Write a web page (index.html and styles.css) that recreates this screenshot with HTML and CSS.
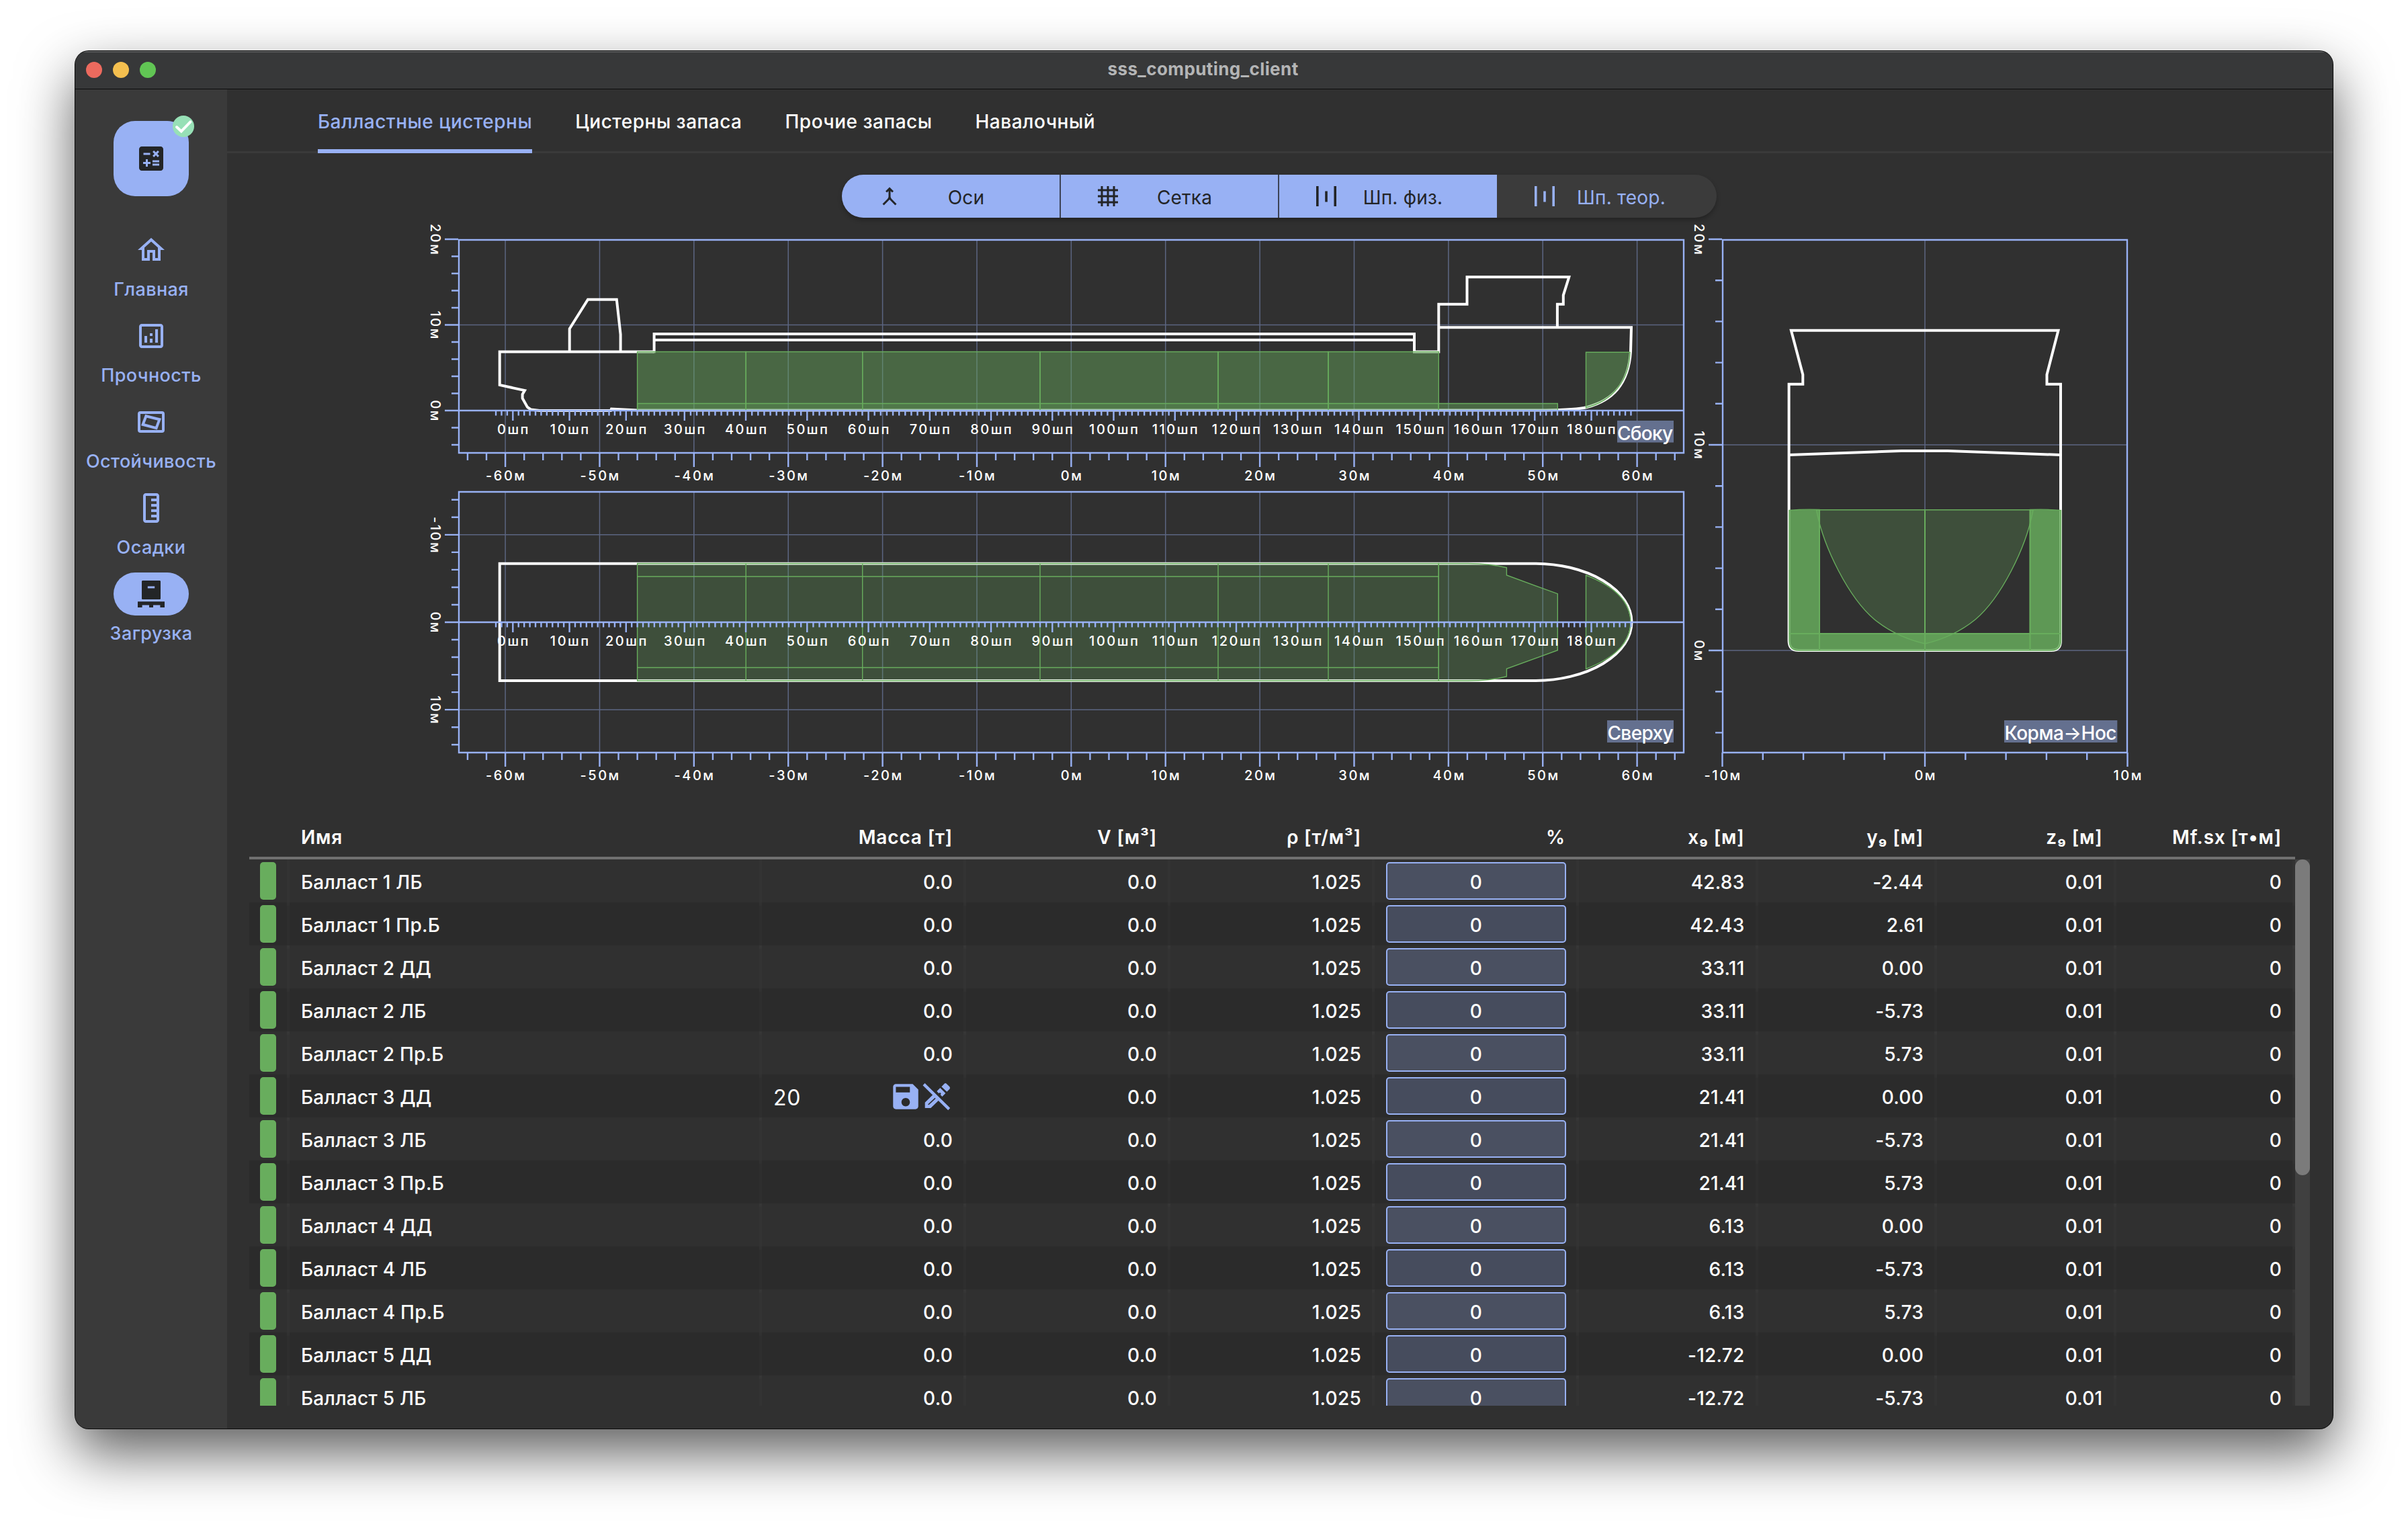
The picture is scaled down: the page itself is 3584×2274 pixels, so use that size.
FILE: index.html
```html
<!DOCTYPE html>
<html lang="ru">
<head>
<meta charset="utf-8">
<title>sss_computing_client</title>
<link rel="stylesheet" href="styles.css">
</head>
<body>
<div class="window">
  <header class="titlebar">
    <div class="lights"><i class="light red"></i><i class="light yellow"></i><i class="light green"></i></div>
    <span class="title">sss_computing_client</span>
  </header>
  <div class="content">
    <nav class="rail">
      <button class="fab">
        <svg class="icon" viewBox="0 0 24 24"><path fill-rule="evenodd" d="M19 3H5c-1.1 0-2 .9-2 2v14c0 1.1.9 2 2 2h14c1.1 0 2-.9 2-2V5c0-1.1-.9-2-2-2zm-5.97 4.06L14.09 6l1.41 1.41L16.91 6l1.06 1.06-1.41 1.41 1.41 1.41-1.06 1.06-1.41-1.4-1.41 1.41-1.06-1.06 1.41-1.41-1.41-1.42zm-6.78.66h5v1.5h-5v-1.5zM11.5 16h-2v2H8v-2H6v-1.5h2v-2h1.5v2h2V16zm6.5 1.25h-5v-1.5h5v1.5zm0-2.5h-5v-1.5h5v1.5z"/></svg>
        <span class="badge"><svg viewBox="0 0 24 24"><path d="M4.5 12.8L9.6 17.6L19.8 7" /></svg></span>
      </button>
      <a class="dest"><span class="pill"><svg class="icon" viewBox="0 0 24 24"><path d="M12 5.69l5 4.5V18h-2v-6H9v6H7v-7.81l5-4.5M12 3L2 12h3v8h6v-6h2v6h6v-8h3L12 3z"/></svg></span><span class="dest-label">Главная</span></a>
      <a class="dest"><span class="pill"><svg class="icon" viewBox="0 0 24 24"><path d="M19 3H5c-1.1 0-2 .9-2 2v14c0 1.1.9 2 2 2h14c1.1 0 2-.9 2-2V5c0-1.1-.9-2-2-2zm0 16H5V5h14v14zM7 12h2v5H7zm8-5h2v10h-2zm-4 7h2v3h-2zm0-4h2v2h-2z"/></svg></span><span class="dest-label">Прочность</span></a>
      <a class="dest"><span class="pill"><svg class="icon outline" viewBox="0 0 24 24"><rect x="3" y="5" width="18" height="14" rx="1"/><path d="M8.2 7.6L18.2 10.1L15.8 16.6L5.8 13.9z"/></svg></span><span class="dest-label">Остойчивость</span></a>
      <a class="dest"><span class="pill"><svg class="icon" viewBox="0 0 24 24"><path transform="rotate(90 12 12)" d="M21 6H3c-1.1 0-2 .9-2 2v8c0 1.1.9 2 2 2h18c1.1 0 2-.9 2-2V8c0-1.1-.9-2-2-2zm0 10H3V8h2v4h2V8h2v4h2V8h2v4h2V8h2v4h2V8h2v8z"/></svg></span><span class="dest-label">Осадки</span></a>
      <a class="dest active"><span class="pill"><svg class="icon" viewBox="0 0 24 24"><path fill-rule="evenodd" d="M5.8 2h12.4c.5 0 .8.3.8.8v12.4c0 .5-.3.8-.8.8H5.800c-.5 0-.8-.3-.8-.8V2.800c0-.5.3-.8.8-.8zM9.400 6.200v1.500h5.200V6.200zM2 17.600h20V22h-3.300v-1.700h-5.200V22h-3v-1.700H5.300V22H2z"/></svg></span><span class="dest-label">Загрузка</span></a>
    </nav>
    <main class="main">
      <div class="tabs">
        <a class="tab current">Балластные цистерны</a>
        <a class="tab">Цистерны запаса</a>
        <a class="tab">Прочие запасы</a>
        <a class="tab">Навалочный</a>
      </div>
      <div class="toggles">
        <button class="toggle on"><svg viewBox="0 0 24 24"><path d="M6.41 21L5 19.59l4.830-4.830c.75-.75 1.170-1.770 1.170-2.830v-5.100L9.410 8.410 8 7l4-4 4 4-1.410 1.410L13 6.830v5.100c0 1.060.42 2.080 1.170 2.830L19 19.590 17.590 21 12 15.410 6.410 21z"/></svg><span>Оси</span></button>
        <button class="toggle on"><svg viewBox="0 0 24 24"><path d="M22 7V5h-3V2h-2v3h-4V2h-2v3H7V2H5v3H2v2h3v4H2v2h3v4H2v2h3v3h2v-3h4v3h2v-3h4v3h2v-3h3v-2h-3v-4h3v-2h-3V7h3zM7 7h4v4H7V7zm0 10v-4h4v4H7zm10 0h-4v-4h4v4zm0-6h-4V7h4v4z"/></svg><span>Сетка</span></button>
        <button class="toggle on"><svg viewBox="0 0 24 24"><path d="M2 2h2.400v20H2zM10.800 7h2.400v10.600h-2.400zM19.600 2H22v20h-2.400z"/></svg><span>Шп. физ.</span></button>
        <button class="toggle"><svg viewBox="0 0 24 24"><path d="M2 2h2.400v20H2zM10.800 7h2.400v10.600h-2.400zM19.600 2H22v20h-2.400z"/></svg><span>Шп. теор.</span></button>
      </div>

      <div class="views">
        <div class="views-left">
          <svg id="side" class="view" width="1871" height="392" viewBox="636 330 1871 392">
            <g class="grid"></g>
            <g class="hull">
              <path d="M973.600 523.500H743.700V573L781 581L777.600 586.700V592.700L785 606L790 609.500L803 611H909L910 608.500L948 610.500H2300C2335 610 2350 609 2362 606C2400 596 2424 572 2427 523L2428 487.300H2141.300"/>
              <path d="M847.700 523V489.300L875 445.700H917.800L923.600 497.700V523"/>
              <path d="M973.600 525.300V497H2105V523.500H2141.300V452.700H2183.500V412.300H2335.300L2326.800 439.300V452.700H2317.900V487M973.600 506H2105"/>
            </g>
            <g class="tanks double">
              <path d="M948.600 523.500H1110.200V611H948.600z"/><path d="M1110.200 523.500H1283.700V611H1110.200z"/><path d="M1283.700 523.500H1548V611H1283.700z"/><path d="M1548 523.500H1813V611H1548z"/><path d="M1813 523.500H1977V611H1813z"/><path d="M1977 523.500H2141.300V611H1977z"/>
              <path d="M2360.500 524.300H2426C2425 566 2400 597 2360.500 606.700z"/>
              <path d="M2141.300 600.500H2318.300V611H2141.300z"/>
            </g>
            <g class="tanks"><path d="M948.600 600.500H2141.300V611H948.600z"/></g>
            <g class="axes"></g>
            <g class="tag"><rect x="2407" y="626" width="84" height="32.500"/><text x="2448.500" y="654.500" textLength="83">Сбоку</text></g>
          </svg>
          <svg id="top" class="view" width="1871" height="454" viewBox="636 722 1871 454">
            <g class="grid"></g>
            <g class="hull"><path d="M743.700 838.700H2284A144.500 87.150 0 0 1 2284 1013H743.700z"/></g>
            <g class="tanks">
              <path d="M948.600 838.500H2141.300V1013.300H948.600z"/>
              <path d="M2141.300 838.500H2185Q2218 839 2242.400 844.700V856L2318.300 883.700V967.700L2242.400 995.300V1006.700Q2218 1013 2185 1013.300H2141.300z"/>
              <path d="M2360.500 856Q2427 882 2427 926Q2427 970 2360.500 995.500z"/>
              <path class="line" d="M948.600 858H2141.300M948.600 993.500H2141.300M1110.200 838.500V1013.300M1283.700 838.500V1013.300M1548 838.500V1013.300M1813 838.500V1013.300M1977 838.500V1013.300"/>
            </g>
            <g class="axes"></g>
            <g class="tag"><rect x="2392" y="1072" width="99" height="33"/><text x="2441.500" y="1101" textLength="98">Сверху</text></g>
          </svg>
        </div>
        <svg id="front" class="view" width="693" height="846" viewBox="2507 330 693 846">
          <g class="grid"></g>
          <g class="hull">
            <path d="M2665.900 491.700H3063.500L3046.500 557.500V571.700H3067V953.500Q3067 968 3053 968H2677Q2662.600 968 2662.600 953.500V571.700H2683.300V557.500z"/>
            <path d="M2662.600 677L2830 671H2899L3067 677"/>
          </g>
          <g class="tanks">
            <path d="M2703.500 758.800C2714 815 2752 890 2790 922Q2822 948 2865 958Q2908 948 2940 922C2978 890 3016 815 3026 758.800z"/>
            <path class="solid" d="M2663 759.500Q2685 757.500 2708 758.500V943H3021.500V758.500Q3045 757.500 3067.500 759.500V953.500Q3067 968 3053 968H2677Q2663 968 2663 953.500z"/>
            <path class="line bold" d="M2865 759.500V968M2708 758.500V968M3021.500 758.500V968M2663 943H3067"/>
          </g>
          <g class="axes"></g>
          <g class="tag"><rect x="2983" y="1072" width="168.300" height="33"/><text x="3067" y="1101" textLength="167">Корма→Нос</text></g>
        </svg>
      </div>

      <section class="tanks-table">
        <div class="row head"><span></span><span class="name">Имя</span><span>Масса [т]</span><span>V [м³]</span><span>ρ [т/м³]</span><span>%</span><span>x₉ [м]</span><span>y₉ [м]</span><span>z₉ [м]</span><span>Mf.sx [т•м]</span></div>
        <div class="scroller">
          <div class="rows">
            <div class="row"><span class="mark"><i></i></span><span class="name">Балласт 1 ЛБ</span><span>0.0</span><span>0.0</span><span>1.025</span><span class="level"><b>0</b></span><span>42.83</span><span>-2.44</span><span>0.01</span><span>0</span></div>
            <div class="row"><span class="mark"><i></i></span><span class="name">Балласт 1 Пр.Б</span><span>0.0</span><span>0.0</span><span>1.025</span><span class="level"><b>0</b></span><span>42.43</span><span>2.61</span><span>0.01</span><span>0</span></div>
            <div class="row"><span class="mark"><i></i></span><span class="name">Балласт 2 ДД</span><span>0.0</span><span>0.0</span><span>1.025</span><span class="level"><b>0</b></span><span>33.11</span><span>0.00</span><span>0.01</span><span>0</span></div>
            <div class="row"><span class="mark"><i></i></span><span class="name">Балласт 2 ЛБ</span><span>0.0</span><span>0.0</span><span>1.025</span><span class="level"><b>0</b></span><span>33.11</span><span>-5.73</span><span>0.01</span><span>0</span></div>
            <div class="row"><span class="mark"><i></i></span><span class="name">Балласт 2 Пр.Б</span><span>0.0</span><span>0.0</span><span>1.025</span><span class="level"><b>0</b></span><span>33.11</span><span>5.73</span><span>0.01</span><span>0</span></div>
            <div class="row"><span class="mark"><i></i></span><span class="name">Балласт 3 ДД</span><span class="edit"><em>20</em><svg class="save" viewBox="0 0 24 24"><path d="M17 3H5c-1.110 0-2 .9-2 2v14c0 1.100.89 2 2 2h14c1.100 0 2-.9 2-2V7l-4-4zm-5 16c-1.660 0-3-1.340-3-3s1.340-3 3-3 3 1.340 3 3-1.340 3-3 3zm3-10H5V5h10v4z"/></svg><svg class="cancel" viewBox="275 90 132 132"><path d="M289 207V182L325 147L350 173L315 207z"/><path class="slit" d="M304 192L335 163"/><path d="M342 132L357 117L381 141L366 156L358 148L361 143L357 138L350 141z"/><path d="M363 112L376 98Q380 94 385 98L399 112Q403 117 399 122L387 134z"/><path class="slash" d="M284 101L397 212"/></svg></span><span>0.0</span><span>1.025</span><span class="level"><b>0</b></span><span>21.41</span><span>0.00</span><span>0.01</span><span>0</span></div>
            <div class="row"><span class="mark"><i></i></span><span class="name">Балласт 3 ЛБ</span><span>0.0</span><span>0.0</span><span>1.025</span><span class="level"><b>0</b></span><span>21.41</span><span>-5.73</span><span>0.01</span><span>0</span></div>
            <div class="row"><span class="mark"><i></i></span><span class="name">Балласт 3 Пр.Б</span><span>0.0</span><span>0.0</span><span>1.025</span><span class="level"><b>0</b></span><span>21.41</span><span>5.73</span><span>0.01</span><span>0</span></div>
            <div class="row"><span class="mark"><i></i></span><span class="name">Балласт 4 ДД</span><span>0.0</span><span>0.0</span><span>1.025</span><span class="level"><b>0</b></span><span>6.13</span><span>0.00</span><span>0.01</span><span>0</span></div>
            <div class="row"><span class="mark"><i></i></span><span class="name">Балласт 4 ЛБ</span><span>0.0</span><span>0.0</span><span>1.025</span><span class="level"><b>0</b></span><span>6.13</span><span>-5.73</span><span>0.01</span><span>0</span></div>
            <div class="row"><span class="mark"><i></i></span><span class="name">Балласт 4 Пр.Б</span><span>0.0</span><span>0.0</span><span>1.025</span><span class="level"><b>0</b></span><span>6.13</span><span>5.73</span><span>0.01</span><span>0</span></div>
            <div class="row"><span class="mark"><i></i></span><span class="name">Балласт 5 ДД</span><span>0.0</span><span>0.0</span><span>1.025</span><span class="level"><b>0</b></span><span>-12.72</span><span>0.00</span><span>0.01</span><span>0</span></div>
            <div class="row"><span class="mark"><i></i></span><span class="name">Балласт 5 ЛБ</span><span>0.0</span><span>0.0</span><span>1.025</span><span class="level"><b>0</b></span><span>-12.72</span><span>-5.73</span><span>0.01</span><span>0</span></div>
          </div>
          <div class="track"><div class="thumb"></div></div>
        </div>
      </section>
    </main>
  </div>
</div>
<script src="charts.js"></script>
</body>
</html>
```
FILE: styles.css
```css
:root {
  --primary: #98b1f4;
  --surface: #303030;
  --raised: #3a3a3a;
  --ink: #232527;
  --green: #68ad5d;
}
* { box-sizing: border-box; }
body {
  margin: 0;
  width: 3584px;
  height: 2274px;
  padding: 76px 112px;
  overflow: hidden;
  background: #fff;
  color: #fff;
  font: 500 28px/32px Inter, "Liberation Sans", sans-serif;
}
button { border: 0; padding: 0; background: none; font: inherit; color: inherit; }
.window {
  width: 3360px;
  height: 2050px;
  border-radius: 20px;
  overflow: hidden;
  background: var(--surface);
  box-shadow: 0 0 0 1px #0a0a0a, 0 36px 84px rgba(0, 0, 0, .64);
  display: flex;
  flex-direction: column;
}
.titlebar {
  height: 57px;
  display: grid;
  grid-template-columns: 1fr auto 1fr;
  align-items: center;
  background: #373839;
  border-bottom: 1px solid #0c0c0c;
  box-shadow: inset 0 2px #5a5b5c;
}
.lights { display: flex; gap: 16px; padding-left: 16px; }
.light { width: 24px; height: 24px; border-radius: 50%; }
.red { background: #ec6a5e; }
.yellow { background: #f4bf4f; }
.green { background: #61c554; }
.title { font-size: 26px; font-weight: 700; color: #b4b5b6; letter-spacing: .42px; padding: 0 3px 2px 0; }
.content { flex: 1; display: flex; min-height: 0; }

.rail {
  width: 226px;
  padding-top: 47px;
  background: var(--raised);
  display: flex;
  flex-direction: column;
  align-items: center;
}
.icon { width: 48px; height: 48px; fill: currentColor; }
.icon.outline { fill: none; stroke: currentColor; stroke-width: 2; }
.fab {
  position: relative;
  width: 112px;
  height: 112px;
  margin-bottom: 48px;
  border-radius: 32px;
  background: var(--primary);
  color: var(--ink);
  display: grid;
  place-items: center;
}
.badge {
  position: absolute;
  top: -8px;
  right: -8px;
  width: 32px;
  height: 32px;
  border-radius: 50%;
  background: #97e0b6;
}
.badge svg { display: block; fill: none; stroke: #fff; stroke-width: 3; stroke-linecap: round; }
.dest {
  height: 128px;
  display: flex;
  flex-direction: column;
  align-items: center;
  gap: 11px;
  color: var(--primary);
  white-space: nowrap;
}
.pill { width: 112px; height: 64px; border-radius: 32px; display: grid; place-items: center; }
.active .pill { background: var(--primary); color: var(--ink); }
.dest-label { font-size: 27px; letter-spacing: .4px; }

.main { flex: 1; min-width: 0; display: flex; flex-direction: column; }
.tabs {
  height: 95px;
  padding-left: 135px;
  display: flex;
  gap: 64px;
  border-bottom: 3px solid var(--raised);
}
.tab { height: 95px; padding-top: 32px; white-space: nowrap; letter-spacing: .5px; }
.current {
  color: var(--primary);
  background: radial-gradient(circle at 50% 100%, var(--primary) 0 100%) bottom / 100% 6px no-repeat;
}
.toggles {
  display: flex;
  width: 1302px;
  height: 64px;
  margin: 32px 0 0 915px;
  border-radius: 32px;
  overflow: hidden;
  background: #3b3b3b;
  color: var(--primary);
  font-weight: 400;
  box-shadow: 0 4px 6px rgba(0, 0, 0, .25);
}
.toggle { width: 325px; padding: 2px 0 0 53px; display: flex; align-items: center; gap: 16px; }
.toggle svg { width: 36px; height: 36px; fill: currentColor; margin-top: -3px; }
.toggle span { width: 160px; padding-top: 1px; text-align: center; letter-spacing: .2px; }
.toggle.on { background: var(--primary); color: var(--ink); }
.toggle.on + .toggle.on { box-shadow: -1px 0 #3c4356, inset 1px 0 #3c4356; }

.views { display: flex; margin: 6px 0 0 298px; }
.views-left { display: flex; flex-direction: column; }
.view { display: block; overflow: visible; }
.grid path { stroke: rgba(152, 177, 244, .42); stroke-width: 1.5; fill: none; }
.hull path { stroke: #fff; stroke-width: 4; fill: none; }
.tanks path { stroke: var(--green); stroke-width: 1.4; fill: var(--green); fill-opacity: .25; }
.tanks.double path { fill-opacity: .4375; }
.tanks .line { fill: none; }
.tanks .bold { stroke-width: 2; }
.tanks .solid { fill-opacity: .84; }
.axes path { stroke: var(--primary); stroke-width: 2.4; fill: none; }
.axes text { fill: #fff; font-size: 20px; letter-spacing: 2.5px; text-anchor: middle; }
.tag rect { fill: #64708f; }
.tag text { fill: #fff; font-size: 28px; text-anchor: middle; }

.tanks-table { width: 3067px; margin: 40px 0 0 33px; }
.row {
  display: grid;
  grid-template-columns: 60px 703px repeat(4, 304px) repeat(4, 266.500px);
  width: 3045px;
  height: 64px;
  line-height: 69px;
  text-align: right;
  letter-spacing: .25px;
}
.row > span { padding-right: 16px; border-right: 4px solid rgba(255, 255, 255, .015); }
.row .name { text-align: left; padding-left: 17px; font-kerning: none; }
.row .mark { padding: 4px 0 0 16px; }
.mark i { display: block; width: 24px; height: 56px; border-radius: 5px; background: var(--green); }
.row .level { padding: 4px 15px 4px 17px; }
.level b {
  display: block;
  height: 56px;
  border: 2px solid var(--primary);
  border-radius: 5px;
  background: rgba(152, 177, 244, .25);
  font-weight: 500;
  line-height: 57px;
  text-align: center;
}
.rows .row:nth-child(even) { background: #2b2b2b; }
.row.head { height: 63px; line-height: 60px; font-weight: 600; letter-spacing: .85px; border-bottom: 4px solid #707070; }
.head > span { border-color: transparent; }
.row .edit { display: flex; align-items: center; padding: 0 20px 0 17px; }
.edit em { flex: 1; text-align: left; font-style: normal; font-size: 32px; font-weight: 400; line-height: 64px; letter-spacing: .8px; }
.edit svg { fill: var(--primary); margin-top: -4px; }
.save { width: 50px; height: 50px; margin-right: -1px; }
.cancel { width: 44px; height: 44px; margin-right: -2px; }
.edit .slit { stroke: #2b2b2b; stroke-width: 5; }
.edit .slash { stroke: var(--primary); stroke-width: 13; }
.scroller { display: flex; height: 813px; overflow: hidden; }
.track { width: 22px; height: 813px; background: #404040; }
.thumb { height: 470px; border-radius: 11px; background: #7b7b7b; }
```
FILE: charts.js
```js
const NS = 'http://www.w3.org/2000/svg';

function add(parent, tag, attrs, text) {
  const el = document.createElementNS(NS, tag);
  for (const k in attrs) el.setAttribute(k, attrs[k]);
  if (text) el.textContent = text;
  parent.appendChild(el);
}

// c: plot box, origin (x0, y0), scale (kx, ky) in px per metre, value ranges
function drawChart(c) {
  const svg = document.getElementById(c.id);
  const grid = svg.querySelector('.grid');
  const axes = svg.querySelector('.axes');
  const px = m => c.x0 + m * c.kx;
  const py = m => c.y0 + m * c.ky;
  let g = '';
  let a = `M${c.l + 1} ${c.t + 1}H${c.r - 1}V${c.b - 1}H${c.l + 1}z`;
  for (let m = c.xmin; m <= c.xmax; m += 2) {
    const major = m % 10 === 0;
    a += `M${px(m)} ${c.b - 1}v${major ? 21 : 11}`;
    if (!major) continue;
    if (px(m) > c.l + 5 && px(m) < c.r - 5) g += `M${px(m)} ${c.t}V${c.b}`;
    add(axes, 'text', { x: px(m) + 1.2, y: c.b + 40 }, m + 'м');
  }
  for (let m = c.ymin; m <= c.ymax; m += 2) {
    const major = m % 10 === 0;
    const y = py(m);
    a += `M${c.l} ${y}h${major ? -20 : -10}`;
    if (!major) continue;
    if (y > c.t + 5 && y < c.b - 5) g += `M${c.l} ${y}H${c.r}`;
    add(axes, 'text', { transform: `translate(${c.l - 41} ${y + 1.2}) rotate(90)` }, m + 'м');
  }
  if (c.frames) {
    a += `M${c.l} ${c.y0}H${c.r}`;
    for (let n = -3; n <= 187; n++) {
      const m = -59.2 + 0.6 * n + 0.05 * Math.max(0, Math.min(n, 153) - 26);
      a += `M${px(m)} ${c.y0}v${n % 10 === 0 ? 15 : 7.5}`;
      if (n % 10 === 0) add(axes, 'text', { x: px(m) + 1.2, y: c.y0 + 35.2 }, n + 'шп');
    }
  }
  add(grid, 'path', { d: g });
  const lines = document.createElementNS(NS, 'path');
  lines.setAttribute('d', a);
  axes.prepend(lines);
}

drawChart({ id: 'side', l: 682, r: 2507, t: 356, b: 675, x0: 1594.35, y0: 611, kx: 14.0375, ky: -12.75, xmin: -64, xmax: 64, ymin: -4, ymax: 20, frames: true });
drawChart({ id: 'top', l: 682, r: 2507, t: 731, b: 1121, x0: 1594.35, y0: 926, kx: 14.0375, ky: 13.015, xmin: -64, xmax: 64, ymin: -14, ymax: 14, frames: true });
drawChart({ id: 'front', l: 2563, r: 3167, t: 356, b: 1121, x0: 2865, y0: 968, kx: 30.15, ky: -30.6, xmin: -10, xmax: 10, ymin: -4, ymax: 20 });
```
